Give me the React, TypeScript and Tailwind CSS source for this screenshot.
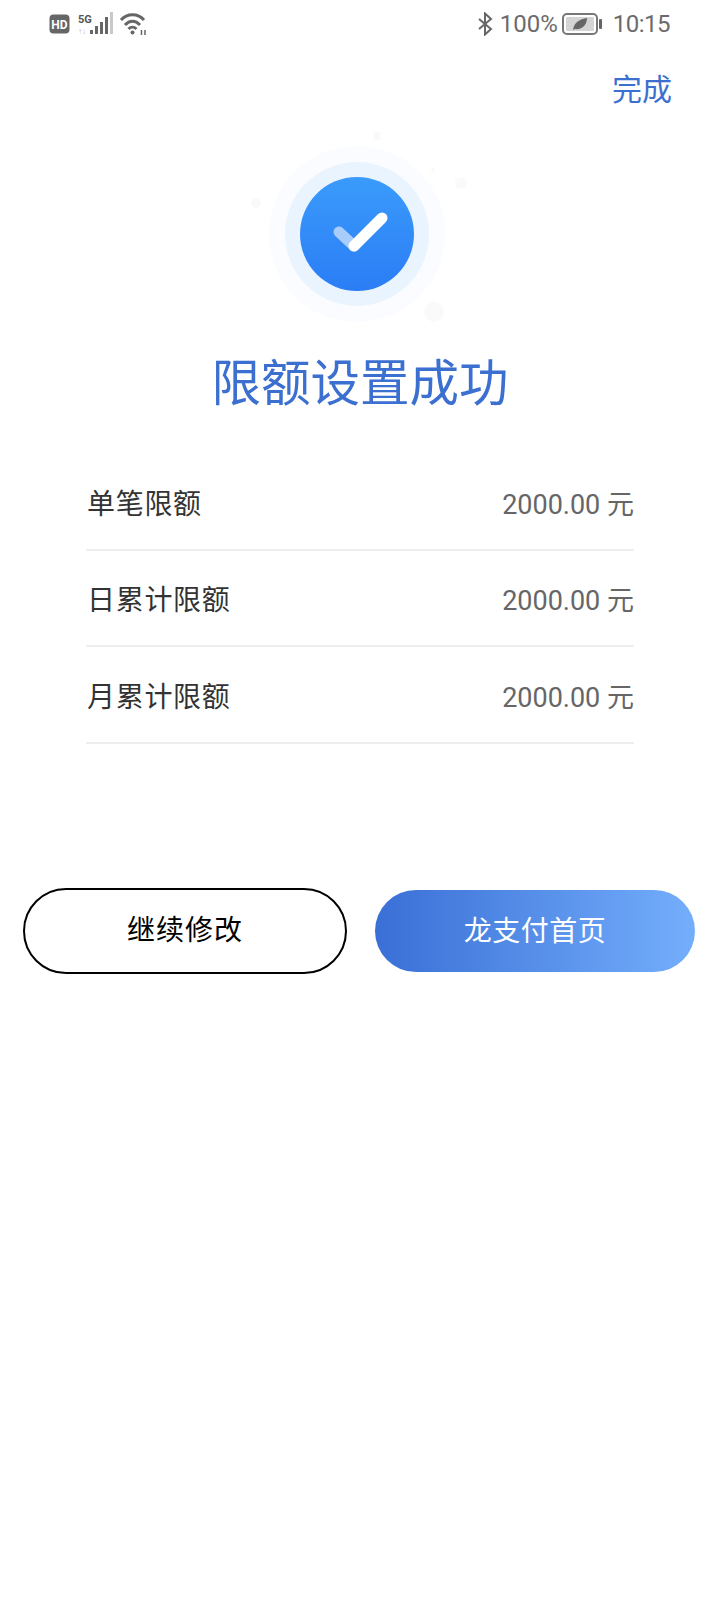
import React from 'react';

const font = { fontFamily: '"Roboto", "Noto Sans CJK SC", sans-serif' };

const rows = [
  { label: '单笔限额', value: '2000.00 元' },
  { label: '日累计限额', value: '2000.00 元' },
  { label: '月累计限额', value: '2000.00 元' },
];

const StatusLeft = () => (
  <div className="flex items-center">
    <svg width="21" height="20" viewBox="0 0 21 20">
      <rect x="0.5" y="0.5" width="20" height="19" rx="4" fill="#666" />
      <text x="10.5" y="14.5" textAnchor="middle" fontSize="12" fontWeight="700" fill="#fff" fontFamily="Roboto">HD</text>
    </svg>
    <svg width="38" height="24" viewBox="0 0 38 24" className="ml-[7px]">
      <text x="1" y="11" fontSize="11" fontWeight="700" fill="#555" fontFamily="Roboto">5G</text>
      <text x="1" y="22" fontSize="8" fill="#bbb" fontFamily="Roboto">↑↓</text>
      <rect x="13" y="18" width="3" height="4" fill="#666" />
      <rect x="18" y="14" width="3" height="8" fill="#666" />
      <rect x="23" y="10" width="3" height="12" fill="#666" />
      <rect x="28" y="5" width="3" height="17" fill="#666" />
      <rect x="33" y="0" width="3" height="22" fill="#c9c9c9" />
    </svg>
    <svg width="30" height="24" viewBox="0 0 30 24" className="ml-[4px]" fill="none" stroke="#666" strokeWidth="3">
      <path d="M2 8 C8 1 19 1 25 8" />
      <path d="M6 13 C10.5 8 16.5 8 21 13" />
      <path d="M9.5 17 C12 14.5 15 14.5 17.5 17" />
      <circle cx="13.5" cy="20.5" r="2" fill="#666" stroke="none" />
      <path d="M22.5 23 V18 M26 23 V18" strokeWidth="1.5" />
    </svg>
  </div>
);

const StatusRight = () => (
  <div className="flex items-center text-[24px] leading-none text-[#6b6b6b]">
    <svg width="16" height="24" viewBox="0 0 16 24" fill="none" stroke="#666" strokeWidth="2">
      <path d="M2 7 L14 17 L8 22.5 V1.5 L14 7 L2 17" />
    </svg>
    <span className="ml-[7px]">100%</span>
    <svg width="40" height="22" viewBox="0 0 40 22" className="ml-[4px]">
      <rect x="1" y="1" width="34" height="20" rx="4" fill="none" stroke="#777" strokeWidth="2" />
      <rect x="4" y="4" width="28" height="14" rx="1" fill="#d4d4d4" />
      <path d="M11 17 C12 9 18 6 25 5 C25 12 20 17 13 16 Z" fill="#666" />
      <rect x="37" y="6" width="3" height="10" rx="1" fill="#666" />
    </svg>
    <span className="ml-[11px] tracking-[-0.5px]">10:15</span>
  </div>
);

const SuccessIcon = () => (
  <div className="w-[260px] h-[210px]">
    <svg width="260" height="210" viewBox="0 0 260 210">
      <defs>
        <linearGradient id="disc" x1="0" y1="0" x2="0" y2="1">
          <stop offset="0" stopColor="#3a9bfb" />
          <stop offset="1" stopColor="#2b7df5" />
        </linearGradient>
      </defs>
      <circle cx="127" cy="114" r="88" fill="#fafcff" />
      <circle cx="127" cy="114" r="72" fill="#e9f4fe" />
      <circle cx="127" cy="114" r="57" fill="url(#disc)" />
      <circle cx="147" cy="16" r="4" fill="#f8f9fa" />
      <circle cx="26" cy="83" r="5" fill="#f8f9fa" />
      <circle cx="231" cy="63" r="6" fill="#fafafb" />
      <circle cx="203" cy="50" r="2" fill="#fafafb" />
      <circle cx="204" cy="192" r="10" fill="#fafafb" />
      <path d="M109 112 L124 126" stroke="#a9cdfa" strokeWidth="11" strokeLinecap="round" />
      <path d="M124 126 L152 98" stroke="#fff" strokeWidth="11" strokeLinecap="round" />
    </svg>
  </div>
);

export default function App() {
  return (
    <div className="w-[720px] h-[1600px] bg-white overflow-hidden" style={font}>
      <div className="h-[48px] pl-[49px] pr-[50px] flex items-center justify-between">
        <StatusLeft />
        <StatusRight />
      </div>

      <div className="h-[72px] pt-[12px] pr-[48px] flex items-center justify-end">
        <button className="text-[30px] leading-none text-[#3b6fd0]">完成</button>
      </div>

      <div className="flex justify-center">
        <SuccessIcon />
      </div>

      <h1 className="mt-[24px] text-center text-[49.5px] leading-[60px] text-[#3b6fd0]">限额设置成功</h1>

      <div className="mx-[86px] mt-[40px]">
        {rows.map(row => (
          <div key={row.label} className="h-[96.5px] pt-[7px] border-b-2 border-[#eeeeee] flex items-center justify-between">
            <span className="pl-[1px] text-[28px] tracking-[0.7px] text-[#333]">{row.label}</span>
            <span className="text-[27px] text-[#666]">{row.value}</span>
          </div>
        ))}
      </div>

      <div className="mt-[144px] pl-[23px] flex items-center">
        <button className="w-[324px] h-[86px] pt-[1px] rounded-[43px] border-2 border-black bg-white text-[28px] tracking-[1px] text-black">
          继续修改
        </button>
        <button className="ml-[28px] w-[320px] h-[82px] pt-[2px] rounded-[41px] bg-gradient-to-r from-[#3a6fd6] to-[#74aefb] text-[28px] tracking-[0.5px] text-white">
          龙支付首页
        </button>
      </div>
    </div>
  );
}
